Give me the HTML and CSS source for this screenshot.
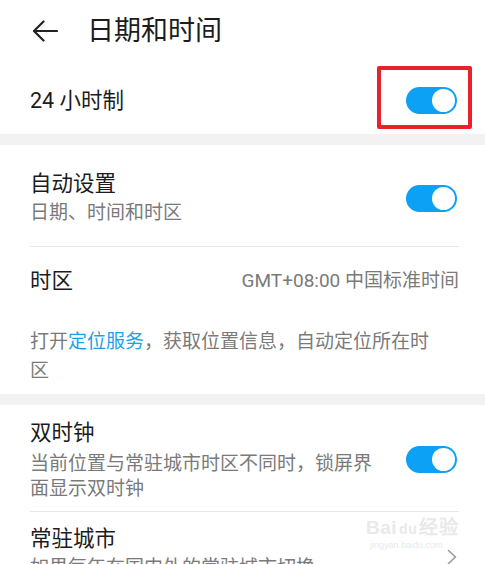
FILE: index.html
```html
<!DOCTYPE html>
<html lang="zh-CN">
<head>
<meta charset="utf-8">
<link rel="stylesheet" href="styles.css">
</head>
<body>
<div class="page">
  <header class="header">
    <svg class="back" width="26" height="22" viewBox="0 0 26 22">
      <path d="M25 11H2.5M11.5 1.5L2 11l9.5 9.5" fill="none" stroke="#222" stroke-width="2.2" stroke-linecap="round" stroke-linejoin="round"/>
    </svg>
    <h1 class="title">日期和时间</h1>
  </header>

  <section class="row row-24">
    <span class="label">24 小时制</span>
    <span class="toggle-wrap">
      <span class="toggle"><span class="knob"></span></span>
      <span class="mark"></span>
    </span>
  </section>

  <div class="band"></div>

  <section class="group">
    <div class="row row-auto">
      <div class="texts">
        <div class="label">自动设置</div>
        <div class="sub">日期、时间和时区</div>
      </div>
      <span class="toggle"><span class="knob"></span></span>
    </div>
    <div class="divider"></div>
    <div class="row row-zone">
      <span class="label">时区</span>
      <span class="value">GMT+08:00 中国标准时间</span>
    </div>
    <p class="info">打开<span class="link">定位服务</span>，获取位置信息，自动定位所在时区</p>
  </section>

  <div class="band"></div>

  <section class="group">
    <div class="row row-dual">
      <div class="texts narrow">
        <div class="label">双时钟</div>
        <div class="sub sub-tight">当前位置与常驻城市时区不同时，锁屏界面显示双时钟</div>
      </div>
      <span class="toggle"><span class="knob"></span></span>
    </div>
    <div class="divider"></div>
    <div class="row row-city">
      <div class="texts">
        <div class="label">常驻城市</div>
        <div class="sub">如果每年在国内外的常驻城市切换</div>
      </div>
      <svg class="chev" width="10" height="16" viewBox="0 0 10 16">
        <path d="M1.5 1.5L8.5 8l-7 6.5" fill="none" stroke="#9a9a9a" stroke-width="1.6" stroke-linecap="round" stroke-linejoin="round"/>
      </svg>
    </div>
  </section>

  <div class="watermark">
    <div class="wm-logo">Bai<span class="wm-du">du</span>经验</div>
    <div class="wm-url">jingyan.baidu.com</div>
  </div>
</div>
</body>
</html>
```

FILE: styles.css
```css
html, body {
  margin: 0;
  padding: 0;
  background: #ffffff;
}
body {
  font-family: Roboto, "Noto Sans CJK SC", sans-serif;
  color: #1c1c1c;
  overflow: hidden;
}
.page {
  position: relative;
  width: 485px;
  height: 564px;
  overflow: hidden;
}
.header {
  display: flex;
  align-items: center;
  height: 62px;
  padding: 0 0 4px 32px;
}
.back {
  flex: none;
}
.title {
  margin: 0 0 0 29px;
  font-size: 27px;
  font-weight: 400;
  line-height: 36px;
  color: #1c1c1c;
}
.row {
  display: flex;
  align-items: center;
  justify-content: space-between;
  padding: 0 28px 0 30px;
}
.label {
  font-size: 21.5px;
  line-height: 29px;
  color: #1c1c1c;
}
.sub {
  font-size: 19px;
  line-height: 29px;
  color: #7a7a7a;
}
.sub-tight {
  line-height: 25px;
  margin-top: 4px;
}
.row-24 {
  height: 68px;
}
.band {
  height: 11px;
  background: #f2f2f2;
}
.toggle {
  position: relative;
  display: block;
  flex: none;
  width: 51px;
  height: 27px;
  border-radius: 14px;
  background: #0ca1f4;
}
.knob {
  position: absolute;
  top: 2px;
  right: 2.5px;
  width: 23px;
  height: 23px;
  border-radius: 50%;
  background: #ffffff;
}
.toggle-wrap {
  position: relative;
  display: block;
}
.mark {
  position: absolute;
  left: -29px;
  top: -21px;
  width: 87px;
  height: 55px;
  border: 4px solid #e8212b;
  border-radius: 2px;
}
.row-auto {
  padding-top: 24px;
  padding-bottom: 19px;
}
.divider {
  height: 1px;
  background: #e8e8e8;
  margin: 0 26px 0 30px;
}
.row-zone {
  padding-top: 19px;
  padding-right: 26px;
}
.value {
  font-size: 19px;
  line-height: 29px;
  color: #7a7a7a;
}
.info {
  margin: 32px 0 0 30px;
  padding-bottom: 9px;
  width: 410px;
  font-size: 19px;
  line-height: 29px;
  color: #7a7a7a;
}
.link {
  color: #1e9fe6;
}
.row-dual {
  padding-top: 13px;
  padding-bottom: 10px;
}
.narrow {
  width: 352px;
}
.row-city {
  padding-top: 12px;
}
.chev {
  flex: none;
  margin-top: 8px;
}
.watermark {
  position: absolute;
  left: 366px;
  top: 518px;
  color: #e9e9e9;
  font-family: "Liberation Sans", sans-serif;
  pointer-events: none;
}
.wm-logo {
  font-size: 19px;
  font-weight: 700;
  line-height: 20px;
  letter-spacing: 0.5px;
}
.wm-du {
  font-size: 14px;
  margin: 0 2px;
}
.wm-url {
  font-size: 9px;
  line-height: 12px;
  margin-left: 4px;
}
```
